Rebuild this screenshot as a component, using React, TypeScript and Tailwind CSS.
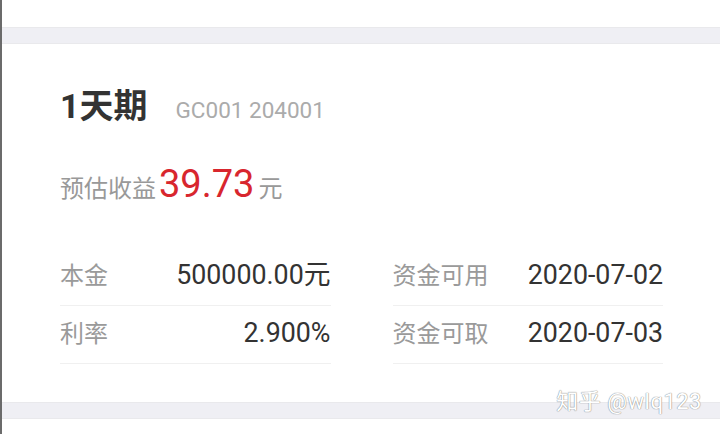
import React from 'react';

const rows = [
  [
    { label: '本金', value: '500000.00元' },
    { label: '利率', value: '2.900%' },
  ],
  [
    { label: '资金可用', value: '2020-07-02' },
    { label: '资金可取', value: '2020-07-03' },
  ],
];

export default function App() {
  return (
    <div
      className="relative w-[720px] h-[434px] overflow-hidden bg-white border-l-2 border-[#6b6b6b]"
      style={{ fontFamily: 'Roboto, "Noto Sans CJK SC", sans-serif' }}
    >
      <div className="h-[27px] bg-white" />
      <div className="h-[17px] bg-[#efeff4] border-y border-[#e9e9ec]" />

      {/* Card */}
      <div className="h-[358px] pl-[58px] pr-[57px] pt-[42px]">
        <div className="flex items-baseline h-[40px] leading-[40px]">
          <span className="text-[34px] font-bold text-[#333333]">1天期</span>
          <span className="ml-[28px] text-[22.5px] text-[#ababab]">GC001 204001</span>
        </div>

        <div className="mt-[38px] flex items-baseline h-[40px] leading-[40px]">
          <span className="text-[24px] text-[#999999]">预估收益</span>
          <span className="ml-[3px] text-[38px] text-[#d8262e]">39.73</span>
          <span className="ml-[4px] text-[24px] text-[#999999]">元</span>
        </div>

        <div className="mt-[44px] grid grid-cols-2 gap-x-[62px]">
          {rows.map((col, i) => (
            <div key={i} className="flex flex-col">
              {col.map((r) => (
                <div
                  key={r.label}
                  className="flex items-center justify-between h-[58px] pb-[2px] border-b border-[#f0f0f0]"
                >
                  <span className="text-[24px] text-[#9a9a9a]">{r.label}</span>
                  <span className="text-[26.8px] text-[#333333]">{r.value}</span>
                </div>
              ))}
            </div>
          ))}
        </div>
      </div>

      <div className="h-[17px] bg-[#efeff4] border-y border-[#e9e9ec]" />
      <div className="h-[15px] bg-white" />

      {/* watermark */}
      <div
        className="absolute right-[18px] top-[385px] text-[22px] text-white tracking-[0.5px]"
        style={{ textShadow: '0 0 1px #8a8a8a, 0 0 1px #8a8a8a' }}
      >
        知乎 @wlq123
      </div>
    </div>
  );
}
